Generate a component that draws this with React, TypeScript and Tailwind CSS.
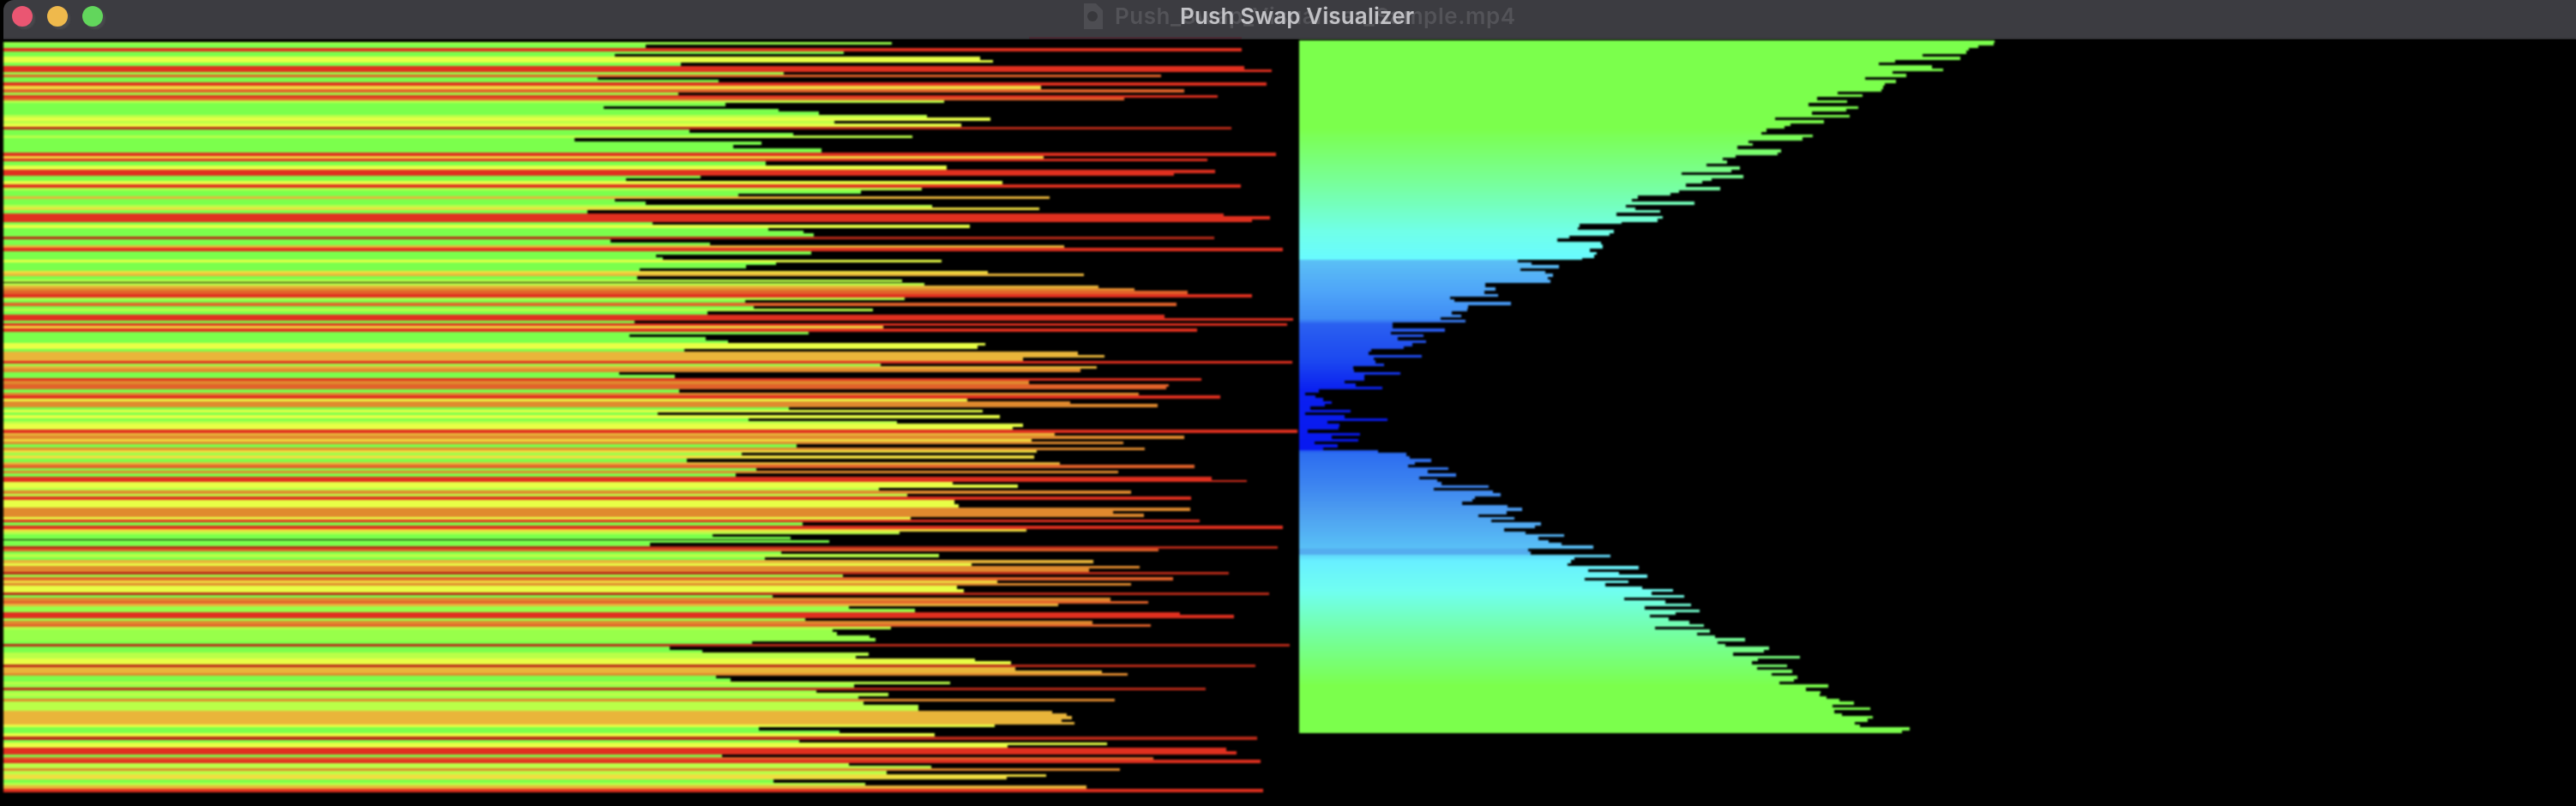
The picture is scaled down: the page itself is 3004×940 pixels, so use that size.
import React from "react";

type Row = [number, number, string];

const C: Record<string, string> = {
  g: "#7bff4c",
  l: "#98ff4a",
  y: "#baff48",
  Y: "#e8ff46",
  w: "#f0de40",
  a: "#e9b53a",
  o: "#e08a2e",
  n: "#e2622a",
  r: "#e0301f",
  d: "#b82a18",
};

const z6: Row[] = [[62,750,"l"],[72,260,"g"],[84,1445,"r"],[95,655,"g"],[102,200,"g"],[113,925,"Y"],[125,950,"Y"],[132,330,"g"],[150,1450,"r"],[157,1505,"r"],[165,535,"l"],[175,1285,"n"],[183,165,"g"],[193,405,"g"],[205,1495,"r"],[215,1047,"w"],[228,1330,"n"],[237,325,"l"],[246,1397,"r"],[256,1212,"n"],[266,853,"y"],[276,420,"g"],[286,177,"g"],[296,525,"g"],[306,605,"g"],[316,820,"y"],[326,945,"Y"],[337,635,"y"],[348,888,"Y"],[357,1425,"d"],[367,348,"g"],[380,553,"g"],[386,790,"y"],[397,120,"g"],[410,490,"g"],[422,435,"g"],[437,610,"g"],[450,1513,"r"],[460,1052,"w"],[468,1377,"r"],[482,500,"g"],[497,858,"Y"],[510,1393,"r"],[520,1310,"r"],[528,370,"g"],[538,222,"g"],[548,970,"Y"],[560,1443,"r"],[571,810,"y"],[582,688,"g"],[592,445,"g"],[601,1063,"a"],[610,200,"g"],[620,260,"g"],[633,830,"y"],[640,1042,"w"],[650,145,"g"],[662,1410,"r"],[672,1502,"r"],[682,1465,"r"],[690,275,"g"],[702,904,"Y"],[712,505,"g"],[722,575,"g"],[732,595,"g"],[742,1390,"d"],[752,190,"g"],[763,388,"g"],[772,1092,"a"],[782,1527,"r"],[795,590,"g"],[805,282,"g"],[815,295,"g"],[823,848,"Y"],[833,520,"g"],[843,460,"g"],[853,248,"g"],[862,940,"w"],[872,1132,"a"],[882,243,"g"],[892,770,"y"]];

const z7: Row[] = [[5,815,"y"],[12,1160,"a"],[22,1232,"o"],[33,1337,"n"],[44,1465,"r"],[55,775,"y"],[62,458,"g"],[74,1315,"n"],[86,475,"g"],[94,712,"y"],[103,383,"g"],[118,1292,"r"],[126,1547,"r"],[135,238,"g"],[146,1535,"r"],[155,733,"w"],[165,1357,"r"],[176,585,"g"],[185,228,"g"],[195,380,"g"],[205,425,"g"],[214,935,"Y"],[225,920,"Y"],[236,337,"g"],[246,1120,"a"],[256,1172,"a"],[265,1010,"a"],[278,1545,"r"],[288,728,"l"],[295,1157,"a"],[307,1125,"o"],[317,208,"g"],[327,318,"g"],[338,1365,"r"],[347,1022,"o"],[358,1300,"n"],[368,1295,"n"],[378,327,"g"],[388,1240,"o"],[399,1403,"r"],[409,900,"Y"],[419,1105,"o"],[429,1278,"o"],[439,545,"g"],[450,930,"Y"],[458,285,"g"],[468,965,"Y"],[478,465,"g"],[488,760,"y"],[498,1010,"Y"],[508,990,"Y"],[520,1555,"r"],[530,1073,"a"],[539,1330,"o"],[550,1027,"w"],[560,1210,"o"],[570,560,"g"],[580,1253,"o"],[590,1037,"w"],[598,452,"l"],[610,1032,"w"],[620,343,"g"],[632,1083,"a"],[642,1352,"n"],[654,480,"g"],[662,1200,"o"],[672,440,"g"],[685,1385,"r"],[692,1455,"r"],[700,870,"Y"],[711,1000,"Y"],[722,725,"y"],[732,1225,"o"],[742,780,"y"],[754,1345,"r"],[765,875,"Y"],[782,883,"Y"],[792,1342,"o"],[802,1190,"o"],[813,1250,"o"],[822,788,"Y"],[832,1362,"r"],[843,572,"g"],[856,1527,"r"],[864,1017,"w"],[873,765,"y"],[883,393,"g"],[893,548,"g"]];

const z8: Row[] = [[5,625,"g"],[15,270,"g"],[24,1517,"d"],[33,1280,"n"],[44,530,"g"],[54,843,"y"],[63,497,"g"],[75,1150,"a"],[84,908,"Y"],[95,1243,"o"],[105,1142,"o"],[115,1420,"d"],[125,652,"l"],[135,1308,"n"],[145,960,"w"],[155,1225,"o"],[165,880,"Y"],[177,893,"Y"],[187,1500,"d"],[197,513,"g"],[207,1185,"o"],[216,1260,"n"],[226,1080,"a"],[236,665,"l"],[246,795,"l"],[256,1322,"r"],[268,1430,"r"],[278,578,"l"],[288,1148,"o"],[298,1265,"n"],[307,748,"y"],[317,632,"l"],[327,640,"l"],[338,705,"l"],[348,717,"l"],[358,472,"g"],[367,1540,"d"],[378,308,"g"],[388,373,"g"],[399,703,"y"],[408,678,"y"],[419,915,"Y"],[429,987,"Y"],[439,1472,"d"],[449,995,"a"],[460,1168,"a"],[468,1218,"o"],[478,400,"g"],[488,430,"g"],[499,865,"y"],[510,675,"l"],[521,1373,"d"],[530,600,"l"],[540,743,"y"],[549,683,"l"],[559,1192,"o"],[570,693,"y"],[582,803,"y"],[592,803,"y"],[600,1068,"a"],[611,1098,"a"],[621,1108,"a"],[631,1088,"a"],[641,1113,"a"],[650,955,"Y"],[660,485,"g"],[670,645,"g"],[681,835,"Y"],[692,1476,"d"],[703,565,"g"],[712,1177,"Y"],[720,980,"Y"],[732,1415,"r"],[744,1435,"r"],[754,412,"g"],[763,1270,"n"],[774,1483,"r"],[785,665,"y"],[795,828,"y"],[803,1203,"o"],[813,740,"y"],[822,1057,"w"],[833,978,"w"],[843,515,"g"],[853,697,"y"],[863,1137,"a"],[875,1487,"r"]];

type Band = { top: number; bottom: number; end: number; color: string };

function leftBands(): Band[] {
  const raw: Band[] = [];
  const add = (rows: Row[], y0: number, last: number) => {
    rows.forEach((row, i) => {
      const nextZ = i + 1 < rows.length ? (rows[i + 1][0] + row[0]) / 2 : last;
      const prevZ = i > 0 ? (rows[i - 1][0] + row[0]) / 2 : row[0] - 6;
      raw.push({ top: y0 + prevZ / 3, bottom: y0 + nextZ / 3, end: 600 + row[1] / 1.704, color: C[row[2]] });
    });
  };
  add(z6, 30, 897);
  add(z7, 330, 897);
  add(z8, 630, 883);
  return raw;
}

const r3 = [55,1452,65,1450,72,1422,82,1405,92,1400,103,1320,114,1390,125,1270,133,1240,143,1338,155,1358,162,1265,173,1290,184,1215,195,1272,205,1252,215,1248,226,1245,237,1165,245,1210,255,1128,266,1182,275,1112,286,1202,296,1180,305,1118,316,1187,325,1050,337,1140,346,1078,356,1068,365,1035,376,1025,386,1120,396,1100,406,1002,416,1010,426,982,437,1062,449,1055,458,978,466,955,476,962,488,925,498,987,508,970,518,880,528,992,538,935,548,918,558,888,570,950,580,875,590,860,600,800,610,788,620,903,631,778,640,795,650,840,660,760,670,845,681,835,690,770,698,693,710,690,720,755,730,748,740,675,749,652,760,733,772,735,785,712,797,725,807,720,816,698,824,580,832,605,842,655,853,585,863,630,873,645,883,635,893,640];
const r4 = [8,650,20,675,32,648,43,680,52,570,62,580,72,710,85,612,95,610,105,575,115,595,123,548,133,605,143,440,153,440,164,558,175,435,184,510,195,450,205,515,215,485,226,465,236,390,246,385,256,505,266,395,276,400,287,420,297,348,307,350,317,457,327,375,337,375,347,330,357,355,368,415,378,270,388,240,398,262,408,280,418,300,428,285,438,250,448,343,458,240,468,330,478,427,488,290,498,318,508,315,519,245,530,365,540,300,550,360,560,260,570,313,580,280,590,405,600,470,610,478,620,527,632,490,640,475,650,567,660,520,671,585,682,500,692,540,702,550,712,658,722,535];
const gap = [566,1735,570,1672,573,1741,577,1750,580,1720,583,1717,587,1705,590,1758,594,1775,598,1757];
const r5 = [5,565,12,638,22,590,33,692,43,680,54,617,63,660,73,738,85,686,95,707,104,733,114,797,125,666,135,670,144,833,155,760,165,752,175,745,185,890,196,787,205,850,215,907,226,780,235,870,245,823,256,897,266,960,276,917,286,982,296,860,306,945,316,997,327,902,337,1013,347,965,356,912,366,952,377,993,388,1023,397,923,407,1035,418,1008,427,1045,437,1107,448,1050,458,1066,467,1155,478,1145,489,1081,498,1217,509,1132,519,1120,529,1192,538,1130,549,1202,560,1160,570,1212,580,1205,590,1175,600,1276,611,1230,622,1260,633,1258,640,1272,650,1298,660,1327,670,1283,680,1360,690,1288,700,1303,710,1366,720,1355,730,1330,740,1340,750,1440,760,1425];

const stops: [number, number[]][] = [
  [47,[123,255,76]],[150,[123,255,76]],[210,[120,255,150]],[270,[112,255,232]],[302,[104,251,255]],[303,[91,192,245]],[340,[78,164,248]],[372,[63,140,245]],[378,[42,96,240]],[420,[28,72,240]],[455,[10,32,240]],[525,[8,24,240]],[527,[44,108,240]],[565,[60,132,240]],[600,[78,160,240]],[640,[88,192,246]],[655,[104,240,255]],[690,[112,255,240]],[740,[116,255,160]],[800,[123,255,76]],[860,[123,255,76]],
];

function gradient(y: number): string {
  if (y > 640 && y < 646) return "rgb(84,172,238)";
  for (let i = 1; i < stops.length; i++) {
    const [b, cb] = stops[i];
    const [a, ca] = stops[i - 1];
    if (y <= b) {
      const t = (y - a) / (b - a || 1);
      return `rgb(${ca.map((v, k) => Math.round(v + (cb[k] - v) * t)).join(",")})`;
    }
  }
  return "rgb(123,255,76)";
}

function rightBands(): Band[] {
  const pts: [number, number][] = [];
  for (let i = 0; i < r3.length; i += 2) pts.push([30 + r3[i] / 3, 1400 + r3[i + 1] / 1.568]);
  for (let i = 0; i < r4.length; i += 2) pts.push([330 + r4[i] / 3, 1400 + r4[i + 1] / 1.96]);
  for (let i = 0; i < gap.length; i += 2) pts.push([gap[i], gap[i + 1]]);
  for (let i = 0; i < r5.length; i += 2) pts.push([600 + r5[i] / 3, 1400 + r5[i + 1] / 1.742]);
  return pts.map(([y, end], i) => {
    const top = i === 0 ? 47 : (pts[i - 1][0] + y) / 2;
    const bottom = i === pts.length - 1 ? 855 : (pts[i + 1][0] + y) / 2;
    return { top, bottom, end, color: gradient(y) };
  });
}

function Bars({ bands, x0 }: { bands: Band[]; x0: number }) {
  return (
    <>
      {bands.map((b, i) => (
        <rect key={i} x={x0} y={b.top} width={b.end - x0} height={b.bottom - b.top} fill={b.color} shapeRendering="crispEdges" />
      ))}
    </>
  );
}

function Light({ color }: { color: string }) {
  return <span className="block h-6 w-6 rounded-full shadow-[3px_3px_2px_rgba(120,120,120,0.22)] blur-[0.5px]" style={{ backgroundColor: color }} />;
}

export default function App() {
  return (
    <div className="flex h-[940px] w-[3004px] flex-col overflow-hidden bg-black font-['Inter','Liberation_Sans',sans-serif]">
      <div className="relative ml-1 flex h-[46px] shrink-0 items-center rounded-tl-xl bg-[#3c3c41] pb-2 pl-[10px]">
        <div className="flex gap-[17px]">
          <Light color="#ea5672" />
          <Light color="#efb94c" />
          <Light color="#62d65c" />
        </div>
        <div className="ml-[1142px] flex items-center gap-[14px] text-[#535358] blur-[0.7px]">
          <svg width="24" height="30" viewBox="0 0 24 30">
            <path d="M2 0h14l8 8v22H2z" fill="#4d4d52" />
            <circle cx="12" cy="15" r="6" fill="#38383c" />
          </svg>
          <span className="text-[26px] font-semibold leading-none tracking-[0.55px]">Push_Swap_Visualizer_Sample.mp4</span>
        </div>
        <span className="absolute left-[1372px] top-[4px] text-[26px] font-semibold leading-[30px] tracking-[0.15px] text-[#c2c2c6] blur-[0.7px]">Push Swap Visualizer</span>
        <div className="absolute left-[1196px] bottom-0 h-[3px] w-[248px] bg-[#4a2c36]" />
      </div>
      <svg className="block h-[894px] w-[3004px] shrink-0 blur-[1px]" viewBox="0 46 3004 894">
        <rect x="0" y="46" width="3004" height="894" fill="#000" />
        <Bars bands={leftBands()} x0={4} />
        <Bars bands={rightBands()} x0={1515} />
      </svg>
    </div>
  );
}
